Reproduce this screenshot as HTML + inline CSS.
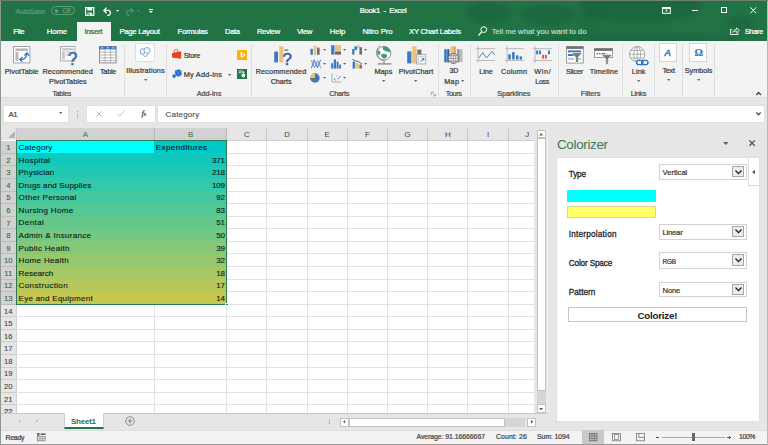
<!DOCTYPE html>
<html lang="en">
<head>
<meta charset="utf-8">
<title>Book1 - Excel</title>
<style>
html,body{margin:0;padding:0}
body{width:768px;height:445px;overflow:hidden;position:relative;background:#e6e6e6;font-family:"Liberation Sans",sans-serif;}
.a{position:absolute;box-sizing:border-box}
.t{position:absolute;white-space:pre;display:block;-webkit-text-stroke:.22px currentColor}
svg{display:block;overflow:visible}
</style>
</head>
<body>
<!-- title bar + ribbon tabs -->
<header class="a" style="left:0;top:0;width:768px;height:41px;background:#217346;overflow:hidden">
<div class="a" style="left:466px;top:2px;width:46px;height:22px;border-radius:50%;background:rgba(0,30,15,0.13);filter:blur(2px)"></div>
<div class="a" style="left:521px;top:4px;width:54px;height:22px;border-radius:50%;background:rgba(0,30,15,0.12);filter:blur(2px)"></div>
<div class="a" style="left:578px;top:-14px;width:124px;height:38px;border-radius:50%;background:rgba(0,30,15,0.13);filter:blur(2px)"></div>
<div class="a" style="left:520px;top:33px;width:220px;height:12px;border-radius:50%;background:rgba(0,30,15,0.1);filter:blur(2px)"></div>
<div class="a" style="left:726px;top:16px;width:28px;height:14px;border-radius:50%;background:rgba(0,30,15,0.1);filter:blur(2px)"></div>
<div class="a" style="left:576px;top:10px;width:28px;height:20px;border-radius:50%;background:rgba(0,30,15,0.06);filter:blur(2px)"></div>
</header>
<div class="a " style="left:0.00px;top:0.00px;width:768.00px;height:1.00px;background:#6f7f76;"></div>
<span id="t0" class="t" style="left:15.30px;top:6.81px;font-size:7.52px;line-height:9.78px;color:#5f9c7c;letter-spacing:-0.299px;">AutoSave</span>
<div class="a " style="left:51.00px;top:6.30px;width:23.50px;height:9.20px;border:1px solid #5f9c7c;border-radius:5px;"></div>
<div class="a " style="left:55.00px;top:9.20px;width:3.40px;height:3.40px;background:#5f9c7c;border-radius:50%;"></div>
<span id="t1" class="t" style="left:62.60px;top:7.34px;font-size:6.40px;line-height:8.32px;color:#5f9c7c;letter-spacing:-0.211px;">Off</span>
<svg class="a" style="left:84.50px;top:6.80px;" width="9.4" height="9" viewBox="0 0 9.4 9"><path d="M.6 .6H8.8V8.4H.6Z" fill="none" stroke="#fff" stroke-width="1.2"/><rect x="2.3" y=".6" width="4.8" height="2.9" fill="#fff"/><rect x="2.6" y="5.6" width="4.2" height="2.8" fill="#fff"/><rect x="3.4" y="6.4" width="1.3" height="2" fill="#217346"/></svg>
<svg class="a" style="left:103.00px;top:6.80px;" width="9" height="9" viewBox="0 0 9 9"><path d="M1 3.4H5.6A2.6 2.6 0 0 1 5.6 8.4H4.2" fill="none" stroke="#fff" stroke-width="1.3"/><path d="M3.6 .6L.9 3.4L3.6 6.2" fill="none" stroke="#fff" stroke-width="1.3"/></svg>
<svg class="a" style="left:115.70px;top:10.40px;" width="3.2" height="1.8" viewBox="0 0 3.2 1.8"><path d="M0 0H3.2 L1.6 1.8Z" fill="#fff"/></svg>
<svg class="a" style="left:125.00px;top:6.80px;" width="9" height="9" viewBox="0 0 9 9"><path d="M8 3.4H3.4A2.6 2.6 0 0 0 3.4 8.4H4.8" fill="none" stroke="#4f9271" stroke-width="1.2"/><path d="M5.4 .6L8.1 3.4L5.4 6.2" fill="none" stroke="#4f9271" stroke-width="1.2"/></svg>
<svg class="a" style="left:137.40px;top:10.40px;" width="3.2" height="1.8" viewBox="0 0 3.2 1.8"><path d="M0 0H3.2 L1.6 1.8Z" fill="#4f9271"/></svg>
<div class="a " style="left:149.30px;top:8.80px;width:3.80px;height:1.00px;background:#fff;"></div>
<svg class="a" style="left:149.30px;top:10.90px;" width="3.8" height="2" viewBox="0 0 3.8 2"><path d="M0 0H3.8 L1.9 2Z" fill="#fff"/></svg>
<span id="t2" class="t" style="left:359.80px;top:6.40px;font-size:7.70px;line-height:10.01px;color:#fff;letter-spacing:-0.343px;">Book1  -  Excel</span>
<svg class="a" style="left:661.70px;top:6.70px;" width="8.8" height="6.8" viewBox="0 0 8.8 6.8"><rect x=".5" y=".5" width="7.8" height="5.8" fill="none" stroke="#fff"/><rect x=".5" y=".5" width="7.8" height="1.6" fill="#fff"/><path d="M4.4 2.6L5.9 4.2H2.9Z" fill="#fff"/></svg>
<div class="a " style="left:692.00px;top:10.00px;width:6.40px;height:1.00px;background:#fff;"></div>
<div class="a " style="left:720.80px;top:7.00px;width:6.40px;height:6.40px;border:1px solid #fff;"></div>
<svg class="a" style="left:749.70px;top:7.00px;" width="6.6" height="6.6" viewBox="0 0 6.6 6.6"><path d="M.3 .3L6.3 6.3M6.3 .3L.3 6.3" stroke="#fff" stroke-width="1"/></svg>
<div class="a " style="left:77.00px;top:22.20px;width:33.60px;height:19.00px;background:#f3f3f3;"></div>
<nav>
<span id="t3" class="t" style="left:13.30px;top:26.93px;font-size:7.80px;line-height:10.14px;color:#fff;letter-spacing:-0.393px;">File</span>
<span id="t4" class="t" style="left:46.70px;top:26.93px;font-size:7.80px;line-height:10.14px;color:#fff;letter-spacing:-0.104px;">Home</span>
<span id="t5" class="t" style="left:84.40px;top:26.93px;font-size:7.80px;line-height:10.14px;color:#217346;letter-spacing:-0.300px;">Insert</span>
<span id="t6" class="t" style="left:119.40px;top:26.93px;font-size:7.80px;line-height:10.14px;color:#fff;letter-spacing:-0.320px;">Page Layout</span>
<span id="t7" class="t" style="left:177.50px;top:26.93px;font-size:7.80px;line-height:10.14px;color:#fff;letter-spacing:-0.286px;">Formulas</span>
<span id="t8" class="t" style="left:225.00px;top:27.11px;font-size:7.52px;line-height:9.78px;color:#fff;letter-spacing:-0.297px;">Data</span>
<span id="t9" class="t" style="left:256.90px;top:27.08px;font-size:7.56px;line-height:9.83px;color:#fff;letter-spacing:-0.290px;">Review</span>
<span id="t10" class="t" style="left:296.90px;top:26.93px;font-size:7.80px;line-height:10.14px;color:#fff;letter-spacing:-0.389px;">View</span>
<span id="t11" class="t" style="left:329.80px;top:26.93px;font-size:7.80px;line-height:10.14px;color:#fff;letter-spacing:-0.149px;">Help</span>
<span id="t12" class="t" style="left:362.50px;top:26.93px;font-size:7.80px;line-height:10.14px;color:#fff;letter-spacing:-0.071px;">Nitro Pro</span>
<span id="t13" class="t" style="left:409.00px;top:26.93px;font-size:7.80px;line-height:10.14px;color:#fff;letter-spacing:-0.317px;">XY Chart Labels</span>
</nav>
<svg class="a" style="left:477.60px;top:26.00px;" width="9.2" height="10" viewBox="0 0 9.2 10"><circle cx="5.8" cy="3.6" r="2.9" fill="none" stroke="#fff" stroke-width="1"/><path d="M3.7 5.8L.5 9.5" stroke="#fff" stroke-width="1.2"/></svg>
<span id="t14" class="t" style="left:491.70px;top:26.93px;font-size:7.80px;line-height:10.14px;color:#cde2d5;letter-spacing:-0.055px;-webkit-text-stroke:.1px currentColor;">Tell me what you want to do</span>
<svg class="a" style="left:730.00px;top:27.30px;" width="10" height="8" viewBox="0 0 10 8"><path d="M2.2 2.6H.5V7.5H8V5.6" fill="none" stroke="#fff" stroke-width=".9"/><path d="M2.6 5.6C3 3.6 4.6 2.6 6.4 2.6V.9L9.4 3.4L6.4 5.8V4.2C5 4.1 3.6 4.5 2.6 5.6Z" fill="none" stroke="#fff" stroke-width=".8"/></svg>
<span id="t15" class="t" style="left:744.70px;top:27.18px;font-size:7.42px;line-height:9.65px;color:#fff;letter-spacing:-0.291px;">Share</span>
<!-- ribbon -->
<section class="a" style="left:0;top:41px;width:768px;height:57px;background:#f3f3f3;border-bottom:1px solid #dcdcdc"></section>
<div class="a " style="left:123.80px;top:43.50px;width:1.00px;height:52.50px;background:#dedede;"></div>
<div class="a " style="left:166.20px;top:43.50px;width:1.00px;height:52.50px;background:#dedede;"></div>
<div class="a " style="left:251.20px;top:43.50px;width:1.00px;height:52.50px;background:#dedede;"></div>
<div class="a " style="left:438.20px;top:43.50px;width:1.00px;height:52.50px;background:#dedede;"></div>
<div class="a " style="left:469.50px;top:43.50px;width:1.00px;height:52.50px;background:#dedede;"></div>
<div class="a " style="left:558.20px;top:43.50px;width:1.00px;height:52.50px;background:#dedede;"></div>
<div class="a " style="left:622.20px;top:43.50px;width:1.00px;height:52.50px;background:#dedede;"></div>
<div class="a " style="left:654.00px;top:43.50px;width:1.00px;height:52.50px;background:#dedede;"></div>
<div class="a " style="left:682.00px;top:43.50px;width:1.00px;height:52.50px;background:#dedede;"></div>
<div class="a " style="left:714.20px;top:43.50px;width:1.00px;height:52.50px;background:#dedede;"></div>
<svg class="a" style="left:13.40px;top:45.90px;" width="17.4" height="17.4" viewBox="0 0 17.4 17.4"><rect x=".5" y=".5" width="16.4" height="16.4" fill="#fff" stroke="#a0a0a0"/><rect x="2.4" y="2.4" width="12.6" height="2.6" fill="#b9b9b9"/><rect x="2.4" y="6" width="3" height="9" fill="#b9b9b9"/><path d="M7.4 13.4C11.6 13.6 13.8 11.4 13.8 7.6" fill="none" stroke="#2f74c0" stroke-width="1.4"/><path d="M11.4 9.6L13.8 6.8L16.2 9.6" fill="none" stroke="#2f74c0" stroke-width="1.3"/><path d="M9.4 11L6.8 13.4L9.4 15.8" fill="none" stroke="#2f74c0" stroke-width="1.3"/></svg>
<span id="t16" class="t" style="left:4.70px;top:66.55px;font-size:7.30px;line-height:9.49px;color:#3a3a3a;letter-spacing:0.036px;">PivotTable</span>
<svg class="a" style="left:60.30px;top:46.00px;" width="17.5" height="19.2" viewBox="0 0 17.5 19.2"><rect x=".5" y=".5" width="14.4" height="14.4" fill="#f8f8f8" stroke="#adadad"/><rect x="2.2" y="2.2" width="11" height="2.2" fill="#c4c4c4"/><rect x="2.2" y="5.4" width="2.6" height="7.8" fill="#c4c4c4"/><rect x="5.8" y="5.4" width="4" height="1.6" fill="#d2d2d2"/><rect x="5.8" y="8" width="3" height="1.6" fill="#d2d2d2"/><text x="7.8" y="18.8" font-family="Liberation Sans, sans-serif" font-size="17.5" fill="#2f74c0" stroke="#2f74c0" stroke-width=".5">?</text></svg>
<span id="t17" class="t" style="left:42.50px;top:66.55px;font-size:7.30px;line-height:9.49px;color:#3a3a3a;letter-spacing:0.082px;">Recommended</span>
<span id="t18" class="t" style="left:49.00px;top:76.95px;font-size:7.30px;line-height:9.49px;color:#3a3a3a;letter-spacing:0.037px;">PivotTables</span>
<svg class="a" style="left:99.00px;top:45.90px;" width="17.6" height="17.4" viewBox="0 0 17.6 17.4"><rect x=".5" y=".5" width="16.6" height="16.4" fill="#fff" stroke="#8c8c8c"/><rect x=".5" y=".5" width="16.6" height="2.9" fill="#3b7ac6"/><path d="M.5 6.2H17.1" stroke="#a6a6a6" stroke-width=".8"/><path d="M.5 9H17.1" stroke="#a6a6a6" stroke-width=".8"/><path d="M.5 11.8H17.1" stroke="#a6a6a6" stroke-width=".8"/><path d="M.5 14.6H17.1" stroke="#a6a6a6" stroke-width=".8"/><path d="M6 3.4V16.9" stroke="#a6a6a6" stroke-width=".8"/><path d="M11.6 3.4V16.9" stroke="#a6a6a6" stroke-width=".8"/><rect x="2.6" y="1.3" width="1.4" height="1.1" fill="#fff"/><rect x="8.1" y="1.3" width="1.4" height="1.1" fill="#fff"/><rect x="13.6" y="1.3" width="1.4" height="1.1" fill="#fff"/></svg>
<span id="t19" class="t" style="left:100.00px;top:66.55px;font-size:7.30px;line-height:9.49px;color:#3a3a3a;letter-spacing:-0.288px;">Table</span>
<span id="t20" class="t" style="left:52.50px;top:89.13px;font-size:7.03px;line-height:9.13px;color:#4a4a4a;letter-spacing:-0.296px;">Tables</span>
<div class="a " style="left:135.30px;top:43.30px;width:19.40px;height:18.40px;background:#fcfcfc;border:1px solid #dedede;"></div>
<svg class="a" style="left:139.60px;top:47.40px;" width="11" height="10.4" viewBox="0 0 11 10.4"><rect x=".6" y="2" width="5.4" height="5" rx=".6" fill="none" stroke="#6f9bd6" stroke-width=".9"/><circle cx="7" cy="3.6" r="3" fill="#fdfdfd" stroke="#6f9bd6" stroke-width=".9"/><path d="M5.4 5.2L7.8 7.6L5.4 10L3 7.6Z" fill="#fdfdfd" stroke="#6f9bd6" stroke-width=".9"/></svg>
<span id="t21" class="t" style="left:126.30px;top:65.75px;font-size:7.30px;line-height:9.49px;color:#3a3a3a;letter-spacing:0.124px;">Illustrations</span>
<svg class="a" style="left:143.60px;top:79.05px;" width="3.4" height="1.9" viewBox="0 0 3.4 1.9"><path d="M0 0H3.4 L1.7 1.9Z" fill="#666"/></svg>
<svg class="a" style="left:171.80px;top:49.40px;" width="9.4" height="10" viewBox="0 0 9.4 10"><path d="M0 3.9L9.2 2.3V9.8L0 8.4Z" fill="#e8431d"/><path d="M2.3 3.6V1.8C2.3 .4 5.6 -.2 5.6 1.2V2.8" fill="none" stroke="#e8431d" stroke-width=".9"/></svg>
<span id="t22" class="t" style="left:183.70px;top:50.55px;font-size:7.30px;line-height:9.49px;color:#3a3a3a;letter-spacing:-0.213px;">Store</span>
<svg class="a" style="left:171.60px;top:69.40px;" width="9.8" height="9.4" viewBox="0 0 9.8 9.4"><path d="M3 1.4L7 .2L9.6 2V6L6.4 7.7L3 6.5Z" fill="#1f70c9"/><path d="M3.2 1.8L6.2 3.2L9.4 2.1M6.2 3.2V7.4" fill="none" stroke="#6aa9e8" stroke-width=".55"/><circle cx="2.1" cy="7.1" r="2.05" fill="#1f70c9" stroke="#f3f3f3" stroke-width=".5"/></svg>
<span id="t23" class="t" style="left:183.70px;top:69.95px;font-size:7.30px;line-height:9.49px;color:#3a3a3a;letter-spacing:0.245px;">My Add-ins</span>
<svg class="a" style="left:228.30px;top:73.65px;" width="3.4" height="1.9" viewBox="0 0 3.4 1.9"><path d="M0 0H3.4 L1.7 1.9Z" fill="#666"/></svg>
<div class="a " style="left:236.70px;top:49.80px;width:10.40px;height:10.00px;background:#fbb10a;"></div>
<svg class="a" style="left:236.70px;top:49.80px;" width="10.4" height="10" viewBox="0 0 10.4 10"><path d="M3.6 1.8L4.9 2.3V6.2L7.2 5.2L5.7 4.5L5.2 3.3L8 4.3V5.7L4.9 7.6L3.6 6.9Z" fill="#fff"/></svg>
<div class="a " style="left:236.70px;top:69.20px;width:10.40px;height:10.00px;background:#1d7a47;"></div>
<svg class="a" style="left:236.70px;top:69.20px;" width="10.4" height="10" viewBox="0 0 10.4 10"><rect x="1.6" y="1.5" width="4.2" height="1" fill="#cfe8d8"/><rect x="1.6" y="3.3" width="3" height="1" fill="#cfe8d8"/><circle cx="6.4" cy="6.6" r="1.9" fill="#fff"/><path d="M6.4 2.4V5" stroke="#fff" stroke-width=".9"/><path d="M5.2 3.8L6.4 2.4L7.6 3.8" fill="none" stroke="#fff" stroke-width=".7"/></svg>
<span id="t24" class="t" style="left:196.70px;top:88.95px;font-size:7.30px;line-height:9.49px;color:#4a4a4a;letter-spacing:-0.025px;">Add-ins</span>
<svg class="a" style="left:273.60px;top:46.20px;" width="18" height="19" viewBox="0 0 18 19"><rect x=".2" y="5.6" width="3.8" height="10.8" fill="#3b78c2"/><rect x="5.2" y=".2" width="4.2" height="16.2" fill="#e9c27c"/><rect x="10.4" y="3.4" width="3.8" height="1.6" fill="#8a8a8a"/><text x="8.4" y="18.6" font-family="Liberation Sans, sans-serif" font-size="17" fill="#335f9e" stroke="#335f9e" stroke-width=".5">?</text></svg>
<span id="t25" class="t" style="left:255.70px;top:66.55px;font-size:7.30px;line-height:9.49px;color:#3a3a3a;letter-spacing:0.102px;">Recommended</span>
<span id="t26" class="t" style="left:270.70px;top:76.95px;font-size:7.30px;line-height:9.49px;color:#3a3a3a;letter-spacing:-0.100px;">Charts</span>
<svg class="a" style="left:310.30px;top:45.00px;" width="10.4" height="9.8" viewBox="0 0 10.4 9.8"><rect x=".4" y="3.8" width="2.4" height="6" fill="#3b78c2"/><rect x="3.6" y=".6" width="2.6" height="9.2" fill="#e9c27c"/><rect x="7" y="2.6" width="2.6" height="7.2" fill="#6e6e6e"/></svg>
<svg class="a" style="left:330.70px;top:45.00px;" width="10.4" height="9.8" viewBox="0 0 10.4 9.8"><rect x=".2" y=".2" width="3.2" height="9.4" fill="#3b78c2"/><rect x="4" y=".2" width="6" height="5.6" fill="#e9c27c"/><rect x="4" y="6.4" width="6" height="3.2" fill="#6e6e6e"/></svg>
<svg class="a" style="left:351.50px;top:45.00px;" width="10.4" height="9.8" viewBox="0 0 10.4 9.8"><rect x=".2" y="4" width="2.2" height="5.6" fill="#3b78c2"/><rect x="2.4" y="1.4" width="2.6" height="3.6" fill="#3b78c2"/><rect x="5" y=".2" width="2.4" height="3" fill="#e9c27c"/><rect x="7.4" y="2.2" width="2.6" height="7.4" fill="#6e6e6e"/></svg>
<svg class="a" style="left:310.60px;top:59.00px;" width="10.4" height="9.8" viewBox="0 0 10.4 9.8"><path d="M.2 5H10" stroke="#a0a0a0" stroke-width=".6"/><path d="M.4 9.2L3.2 .8L6.4 8.8L9.6 .8" fill="none" stroke="#3b78c2" stroke-width=".95"/><path d="M.4 1L3.4 9L6.6 1.6L9.8 9.2" fill="none" stroke="#6f95cc" stroke-width=".95"/></svg>
<svg class="a" style="left:330.70px;top:59.00px;" width="10.4" height="9.8" viewBox="0 0 10.4 9.8"><rect x=".2" y="4.2" width="2" height="5.4" fill="#3b78c2"/><rect x="2.8" y=".4" width="2.2" height="9.2" fill="#3b78c2"/><rect x="5.6" y="2.6" width="2" height="7" fill="#3b78c2"/><rect x="8.2" y="5.6" width="1.8" height="4" fill="#3b78c2"/></svg>
<svg class="a" style="left:351.50px;top:59.00px;" width="10.4" height="9.8" viewBox="0 0 10.4 9.8"><rect x=".6" y="2.6" width="2.6" height="7" fill="#3b78c2"/><rect x="4" y="4.2" width="2.8" height="5.4" fill="#e9c27c"/><rect x="7.4" y="5.6" width="2.4" height="4" fill="#6e6e6e"/><path d="M.4 .4L3.6 1.8L6.8 2.8L10 5" fill="none" stroke="#555" stroke-width=".9"/></svg>
<svg class="a" style="left:310.30px;top:73.30px;" width="10.4" height="9.8" viewBox="0 0 10.4 9.8"><circle cx="5" cy="5" r="4.7" fill="#3b78c2"/><path d="M5 5V.3A4.7 4.7 0 0 0 .3 5Z" fill="#e9c27c"/><path d="M5 5H.3A4.7 4.7 0 0 0 2 8.6Z" fill="#6e6e6e"/></svg>
<svg class="a" style="left:330.70px;top:73.30px;" width="10.4" height="9.8" viewBox="0 0 10.4 9.8"><path d="M1 .2V9H10.2" fill="none" stroke="#9a9a9a" stroke-width=".8"/><rect x="3" y="5.6" width="1.2" height="1.2" fill="#3b78c2"/><rect x="5" y="2.4" width="1.2" height="1.2" fill="#e9c27c"/><rect x="6.6" y="5" width="1.2" height="1.2" fill="#3b78c2"/><rect x="8.2" y="3.2" width="1.2" height="1.2" fill="#3b78c2"/><rect x="4" y="7" width="1.2" height="1.2" fill="#e9c27c"/></svg>
<svg class="a" style="left:322.60px;top:49.10px;" width="3.2" height="1.8" viewBox="0 0 3.2 1.8"><path d="M0 0H3.2 L1.6 1.8Z" fill="#666"/></svg>
<svg class="a" style="left:322.60px;top:63.10px;" width="3.2" height="1.8" viewBox="0 0 3.2 1.8"><path d="M0 0H3.2 L1.6 1.8Z" fill="#666"/></svg>
<svg class="a" style="left:322.60px;top:77.30px;" width="3.2" height="1.8" viewBox="0 0 3.2 1.8"><path d="M0 0H3.2 L1.6 1.8Z" fill="#666"/></svg>
<svg class="a" style="left:343.40px;top:49.10px;" width="3.2" height="1.8" viewBox="0 0 3.2 1.8"><path d="M0 0H3.2 L1.6 1.8Z" fill="#666"/></svg>
<svg class="a" style="left:343.40px;top:63.10px;" width="3.2" height="1.8" viewBox="0 0 3.2 1.8"><path d="M0 0H3.2 L1.6 1.8Z" fill="#666"/></svg>
<svg class="a" style="left:343.40px;top:77.30px;" width="3.2" height="1.8" viewBox="0 0 3.2 1.8"><path d="M0 0H3.2 L1.6 1.8Z" fill="#666"/></svg>
<svg class="a" style="left:364.10px;top:49.10px;" width="3.2" height="1.8" viewBox="0 0 3.2 1.8"><path d="M0 0H3.2 L1.6 1.8Z" fill="#666"/></svg>
<svg class="a" style="left:364.10px;top:63.10px;" width="3.2" height="1.8" viewBox="0 0 3.2 1.8"><path d="M0 0H3.2 L1.6 1.8Z" fill="#666"/></svg>
<span id="t27" class="t" style="left:329.20px;top:88.95px;font-size:7.30px;line-height:9.49px;color:#4a4a4a;letter-spacing:-0.240px;">Charts</span>
<svg class="a" style="left:376.00px;top:45.20px;" width="15.8" height="20" viewBox="0 0 15.8 20"><circle cx="8" cy="8.2" r="6.8" fill="#fff" stroke="#8e8e8e" stroke-width="1"/><path d="M6.4 2.4C8 1.4 10.4 1.6 12 2.8C13.6 4 14.4 5.8 14.2 7C13 7.6 12.2 6.4 11 6.6C9.8 6.8 9.6 5.6 8.6 5.4C7.4 5.2 6.8 4.4 6.4 2.4Z" fill="#459b74"/><path d="M2 5.6C3 5.2 4 6 4.4 7.2C4.6 8.6 3.8 9.6 3 10.4C2 9.4 1.4 7.4 2 5.6Z" fill="#459b74"/><path d="M5.6 9C7 8.4 9.2 8.8 10.6 9.6C11.6 10.4 11.2 12 10 13C8.6 14 7 13.6 6 12.4C5.2 11.4 5 10 5.6 9Z" fill="#459b74"/><path d="M4.2 .6C-1.6 4.6 -.6 13.2 6.8 15.6" fill="none" stroke="#8e8e8e" stroke-width="1"/><path d="M8 15.2V18.4" stroke="#8e8e8e" stroke-width="1.3"/><path d="M1.8 18.9H15.4" stroke="#8e8e8e" stroke-width="1.4"/></svg>
<span id="t28" class="t" style="left:374.50px;top:66.55px;font-size:7.30px;line-height:9.49px;color:#3a3a3a;letter-spacing:-0.015px;">Maps</span>
<svg class="a" style="left:381.60px;top:79.85px;" width="3.4" height="1.9" viewBox="0 0 3.4 1.9"><path d="M0 0H3.4 L1.7 1.9Z" fill="#666"/></svg>
<svg class="a" style="left:407.00px;top:46.20px;" width="19.2" height="18.6" viewBox="0 0 19.2 18.6"><rect x=".2" y="5.4" width="4.2" height="12" fill="#3b78c2"/><rect x="5.2" y=".2" width="4.4" height="17.2" fill="#e9c27c"/><rect x="10.4" y="3.6" width="4" height="7" fill="#6e6e6e"/><rect x="9.4" y="8.6" width="9.4" height="9.4" fill="#fafafa" stroke="#a6a6a6" stroke-width=".9"/><rect x="10.6" y="9.8" width="7" height="1.4" fill="#cfcfcf"/><rect x="10.6" y="11.8" width="1.6" height="5" fill="#cfcfcf"/><path d="M13.6 15.8L16.6 12.8M14.8 12.6H16.8V14.6" fill="none" stroke="#2f74c0" stroke-width="1"/></svg>
<span id="t29" class="t" style="left:398.70px;top:66.55px;font-size:7.30px;line-height:9.49px;color:#3a3a3a;letter-spacing:0.047px;">PivotChart</span>
<svg class="a" style="left:414.30px;top:79.85px;" width="3.4" height="1.9" viewBox="0 0 3.4 1.9"><path d="M0 0H3.4 L1.7 1.9Z" fill="#666"/></svg>
<svg class="a" style="left:430.70px;top:92.00px;" width="4.8" height="4.2" viewBox="0 0 4.8 4.2"><path d="M.3 3V.3H3" fill="none" stroke="#8a8a8a" stroke-width=".7"/><path d="M2 1.6L4.3 3.8M4.4 2V3.9H2.4" fill="none" stroke="#8a8a8a" stroke-width=".7"/></svg>
<svg class="a" style="left:444.30px;top:45.60px;" width="19" height="18" viewBox="0 0 19 18"><rect x=".2" y="3" width="2.6" height="13.6" rx="1" fill="#3b78c2"/><rect x="3.2" y="3" width="2.2" height="13.6" rx="1" fill="#2a5f9e"/><rect x="6.4" y=".2" width="2.6" height="9" rx="1" fill="#e9c27c"/><rect x="9.4" y=".2" width="2.4" height="9" rx="1" fill="#d9a94e"/><rect x="13" y="3" width="2.8" height="13.6" rx="1" fill="#9a9a9a"/><rect x="16" y="3" width="2.6" height="13.6" rx="1" fill="#bdbdbd"/><circle cx="9.4" cy="12.4" r="5" fill="#fff" stroke="#666" stroke-width=".9"/><path d="M4.4 12.4H14.4M9.4 7.4V17.4M5.2 9.8H13.6M5.2 15H13.6" stroke="#666" stroke-width=".6" fill="none"/><ellipse cx="9.4" cy="12.4" rx="2.4" ry="5" fill="none" stroke="#666" stroke-width=".6"/></svg>
<span id="t30" class="t" style="left:449.50px;top:66.69px;font-size:7.10px;line-height:9.23px;color:#3a3a3a;letter-spacing:-0.278px;">3D</span>
<span id="t31" class="t" style="left:444.30px;top:76.95px;font-size:7.30px;line-height:9.49px;color:#3a3a3a;letter-spacing:0.248px;">Map</span>
<svg class="a" style="left:461.00px;top:80.05px;" width="3.4" height="1.9" viewBox="0 0 3.4 1.9"><path d="M0 0H3.4 L1.7 1.9Z" fill="#666"/></svg>
<span id="t32" class="t" style="left:445.70px;top:88.95px;font-size:7.30px;line-height:9.49px;color:#4a4a4a;letter-spacing:-0.386px;">Tours</span>
<svg class="a" style="left:476.40px;top:46.60px;" width="19.4" height="15.6" viewBox="0 0 19.4 15.6"><path d="M0 1.7H19.2M0 13.5H19.2M2.1 -.8V16" stroke="#a6a6a6" stroke-width=".75" fill="none"/><path d="M3 11L6.7 5.4L10.5 11L16.1 4.4L18.6 7.9" fill="none" stroke="#4a86cc" stroke-width="1"/></svg>
<svg class="a" style="left:504.80px;top:46.60px;" width="19.4" height="15.6" viewBox="0 0 19.4 15.6"><path d="M0 1.7H19.2M0 13.5H19.2M2.1 -.8V16" stroke="#a6a6a6" stroke-width=".75" fill="none"/><rect x="3.3" y="7.3" width="2.5" height="5.2" fill="#3b78c2"/><rect x="7.1" y="5.1" width="2.5" height="7.4" fill="#3b78c2"/><rect x="11" y="8.3" width="2.4" height="4.2" fill="#3b78c2"/><rect x="14.6" y="9.4" width="2.5" height="3.1" fill="#3b78c2"/></svg>
<svg class="a" style="left:533.10px;top:46.60px;" width="19.4" height="15.6" viewBox="0 0 19.4 15.6"><path d="M0 1.7H19.2M0 13.5H19.2M2.1 -.8V16" stroke="#a6a6a6" stroke-width=".75" fill="none"/><rect x="3.1" y="3.5" width="1.9" height="3.8" fill="#3b78c2"/><rect x="5.9" y="3.5" width="2" height="3.8" fill="#3b78c2"/><rect x="9.1" y="7.9" width="1.9" height="3.8" fill="#dd5a3a"/><rect x="11.9" y="7.9" width="1.9" height="3.8" fill="#dd5a3a"/><rect x="15" y="3.5" width="1.9" height="3.8" fill="#3b78c2"/></svg>
<span id="t33" class="t" style="left:479.30px;top:66.55px;font-size:7.30px;line-height:9.49px;color:#3a3a3a;letter-spacing:-0.132px;">Line</span>
<span id="t34" class="t" style="left:501.00px;top:66.55px;font-size:7.30px;line-height:9.49px;color:#3a3a3a;letter-spacing:0.169px;">Column</span>
<span id="t35" class="t" style="left:534.30px;top:66.55px;font-size:7.30px;line-height:9.49px;color:#3a3a3a;letter-spacing:0.597px;">Win/</span>
<span id="t36" class="t" style="left:535.30px;top:77.12px;font-size:7.05px;line-height:9.17px;color:#3a3a3a;letter-spacing:-0.297px;">Loss</span>
<span id="t37" class="t" style="left:497.30px;top:88.95px;font-size:7.30px;line-height:9.49px;color:#4a4a4a;letter-spacing:-0.120px;">Sparklines</span>
<svg class="a" style="left:565.70px;top:45.80px;" width="17.8" height="17.6" viewBox="0 0 17.8 17.6"><rect x=".5" y=".5" width="16.8" height="16.6" fill="#fff" stroke="#9a9a9a"/><rect x=".5" y=".5" width="16.8" height="2.4" fill="#6e6e6e"/><rect x="2" y="4.4" width="13" height="2" fill="#3b78c2"/><rect x="2" y="8" width="8" height="2" fill="#3b78c2"/><rect x="2" y="11.8" width="6" height="2" fill="#a9c6e8"/><rect x="10.6" y="11.8" width="4.6" height="2" fill="#a9c6e8"/><path d="M5.4 6.6H16.4L12.4 11.2V16.6H9.6V11.2Z" fill="#7a7a7a" stroke="#fff" stroke-width=".6"/></svg>
<span id="t38" class="t" style="left:566.00px;top:66.55px;font-size:7.30px;line-height:9.49px;color:#3a3a3a;letter-spacing:-0.210px;">Slicer</span>
<svg class="a" style="left:594.20px;top:48.00px;" width="19" height="16.4" viewBox="0 0 19 16.4"><rect x=".5" y=".5" width="18" height="9" fill="#fff" stroke="#9a9a9a"/><rect x=".5" y=".5" width="18" height="2.4" fill="#6e6e6e"/><rect x="2.4" y="5" width="1.6" height="1.4" fill="#3b78c2"/><rect x="5" y="5" width="1.6" height="1.4" fill="#3b78c2"/><rect x="7.6" y="5" width="3.4" height="1.4" fill="#3b78c2"/><rect x="12.2" y="5" width="1.6" height="1.4" fill="#a9c6e8"/><path d="M7.4 6.6H18.4L14.2 11V16.4H11.8V11Z" fill="#7a7a7a" stroke="#fff" stroke-width=".6"/></svg>
<span id="t39" class="t" style="left:589.70px;top:66.55px;font-size:7.30px;line-height:9.49px;color:#3a3a3a;letter-spacing:0.141px;">Timeline</span>
<span id="t40" class="t" style="left:580.80px;top:88.95px;font-size:7.30px;line-height:9.49px;color:#4a4a4a;letter-spacing:-0.062px;">Filters</span>
<svg class="a" style="left:629.00px;top:45.60px;" width="20" height="19.4" viewBox="0 0 20 19.4"><circle cx="8.2" cy="8.2" r="7.6" fill="#fff" stroke="#9a9a9a" stroke-width=".9"/><ellipse cx="8.2" cy="8.2" rx="3.4" ry="7.6" fill="none" stroke="#9a9a9a" stroke-width=".8"/><path d="M.6 8.2H15.8M8.2 .6V15.8M1.8 4.4H14.6M1.8 12H14.6" stroke="#9a9a9a" stroke-width=".8" fill="none"/><rect x="6.4" y="12.8" width="13.4" height="6.6" fill="#f3f3f3" opacity=".0"/><rect x="7.6" y="14.4" width="6.4" height="4.2" rx="2.1" fill="#f3f3f3" stroke="#2f74c0" stroke-width="1.4"/><rect x="12.6" y="14.4" width="6.4" height="4.2" rx="2.1" fill="none" stroke="#2f74c0" stroke-width="1.4"/></svg>
<span id="t41" class="t" style="left:631.70px;top:66.55px;font-size:7.30px;line-height:9.49px;color:#3a3a3a;letter-spacing:0.136px;">Link</span>
<svg class="a" style="left:636.60px;top:79.85px;" width="3.4" height="1.9" viewBox="0 0 3.4 1.9"><path d="M0 0H3.4 L1.7 1.9Z" fill="#666"/></svg>
<span id="t42" class="t" style="left:630.80px;top:88.95px;font-size:7.30px;line-height:9.49px;color:#4a4a4a;letter-spacing:-0.387px;">Links</span>
<div class="a " style="left:658.70px;top:43.30px;width:18.80px;height:18.40px;background:#fdfdfd;border:1px solid #d6d6d6;"></div>
<span class="t" style="left:664.4px;top:45.9px;font-size:9.6px;line-height:13px;color:#3b78c2;font-style:italic;-webkit-text-stroke:.5px #3b78c2;">A</span>
<span id="t43" class="t" style="left:662.50px;top:65.75px;font-size:7.30px;line-height:9.49px;color:#3a3a3a;letter-spacing:-0.297px;">Text</span>
<svg class="a" style="left:666.60px;top:79.05px;" width="3.4" height="1.9" viewBox="0 0 3.4 1.9"><path d="M0 0H3.4 L1.7 1.9Z" fill="#666"/></svg>
<div class="a " style="left:688.70px;top:43.30px;width:18.80px;height:18.40px;background:#fdfdfd;border:1px solid #d6d6d6;"></div>
<span class="t" style="left:694.6px;top:46px;font-size:10.5px;line-height:13px;color:#3b78c2;font-family:'Liberation Serif',serif;font-weight:bold;">Ω</span>
<span id="t44" class="t" style="left:684.70px;top:65.75px;font-size:7.30px;line-height:9.49px;color:#3a3a3a;letter-spacing:-0.031px;">Symbols</span>
<svg class="a" style="left:696.60px;top:79.05px;" width="3.4" height="1.9" viewBox="0 0 3.4 1.9"><path d="M0 0H3.4 L1.7 1.9Z" fill="#666"/></svg>
<svg class="a" style="left:755.80px;top:92.00px;" width="5.2" height="3.2" viewBox="0 0 5.2 3.2"><path d="M.3 3L2.6 .5L4.9 3" fill="none" stroke="#444" stroke-width="1.3"/></svg>
<!-- formula bar -->
<div class="a " style="left:0.00px;top:98.00px;width:768.00px;height:30.00px;background:#e6e6e6;"></div>
<div class="a " style="left:4.10px;top:105.90px;width:63.50px;height:15.70px;background:#fff;box-shadow:0 0 0 .5px #dadada;"></div>
<span id="t45" class="t" style="left:8.40px;top:110.10px;font-size:7.84px;line-height:10.19px;color:#444;letter-spacing:-0.278px;">A1</span>
<svg class="a" style="left:59.30px;top:112.25px;" width="3.4" height="1.9" viewBox="0 0 3.4 1.9"><path d="M0 0H3.4 L1.7 1.9Z" fill="#666"/></svg>
<div class="a " style="left:76.60px;top:110.60px;width:0.90px;height:0.90px;background:#a6a6a6;"></div>
<div class="a " style="left:76.60px;top:112.70px;width:0.90px;height:0.90px;background:#a6a6a6;"></div>
<div class="a " style="left:76.60px;top:114.80px;width:0.90px;height:0.90px;background:#a6a6a6;"></div>
<div class="a " style="left:76.60px;top:116.90px;width:0.90px;height:0.90px;background:#a6a6a6;"></div>
<div class="a " style="left:86.60px;top:105.90px;width:68.90px;height:15.70px;background:#fff;box-shadow:0 0 0 .5px #dadada;"></div>
<svg class="a" style="left:95.60px;top:110.60px;" width="6" height="6" viewBox="0 0 6 6"><path d="M.4 .4L5.6 5.6M5.6 .4L.4 5.6" stroke="#b8b8b8" stroke-width=".9"/></svg>
<svg class="a" style="left:117.20px;top:110.20px;" width="8" height="6.8" viewBox="0 0 8 6.8"><path d="M.4 4L2.6 6.2L7.6 .5" fill="none" stroke="#b8b8b8" stroke-width=".9"/></svg>
<span class="t" style="left:141.4px;top:108.4px;font-size:8.4px;line-height:11px;color:#444;font-family:'Liberation Serif',serif;font-style:italic;letter-spacing:-.3px">f<span style="font-size:6px">x</span></span>
<div class="a " style="left:158.00px;top:105.90px;width:606.30px;height:15.70px;background:#fff;box-shadow:0 0 0 .5px #dadada;"></div>
<span id="t46" class="t" style="left:165.60px;top:109.70px;font-size:8.00px;line-height:10.40px;color:#484848;letter-spacing:0.162px;-webkit-text-stroke:.1px currentColor;">Category</span>
<svg class="a" style="left:756.20px;top:111.60px;" width="5" height="3.2" viewBox="0 0 5 3.2"><path d="M.3 .4L2.5 2.7L4.7 .4" fill="none" stroke="#444" stroke-width="1.3"/></svg>
<!-- worksheet grid -->
<main class="a" style="left:0;top:128px;width:534px;height:285.2px;background:#fff;overflow:hidden">
<div class="a " style="left:0.00px;top:0.00px;width:534.00px;height:12.20px;background:#e6e6e6;"></div>
<div class="a " style="left:16.40px;top:0.00px;width:210.40px;height:12.20px;background:#d2d2d2;"></div>
<div class="a " style="left:16.40px;top:11.50px;width:210.40px;height:0.70px;background:#3f8a63;"></div>
<div class="a " style="left:153.80px;top:1.00px;width:1.00px;height:11.00px;background:#b8b8b8;"></div>
<div class="a " style="left:226.30px;top:1.00px;width:1.00px;height:11.00px;background:#b8b8b8;"></div>
<div class="a " style="left:266.40px;top:1.00px;width:1.00px;height:11.00px;background:#c6c6c6;"></div>
<div class="a " style="left:306.60px;top:1.00px;width:1.00px;height:11.00px;background:#c6c6c6;"></div>
<div class="a " style="left:346.80px;top:1.00px;width:1.00px;height:11.00px;background:#c6c6c6;"></div>
<div class="a " style="left:387.00px;top:1.00px;width:1.00px;height:11.00px;background:#c6c6c6;"></div>
<div class="a " style="left:427.20px;top:1.00px;width:1.00px;height:11.00px;background:#c6c6c6;"></div>
<div class="a " style="left:467.40px;top:1.00px;width:1.00px;height:11.00px;background:#c6c6c6;"></div>
<div class="a " style="left:507.60px;top:1.00px;width:1.00px;height:11.00px;background:#c6c6c6;"></div>
<div class="a " style="left:15.90px;top:1.00px;width:1.00px;height:11.00px;background:#c6c6c6;"></div>
<div class="a " style="left:226.80px;top:11.60px;width:307.40px;height:1.00px;background:#cfcfcf;"></div>
<svg class="a" style="left:7.6px;top:3.2px" width="7" height="7" viewBox="0 0 7 7"><path d="M7 0V7H0Z" fill="#b4b4b4"/></svg>
<div class="a " style="left:0.00px;top:12.70px;width:16.40px;height:272.60px;background:#e6e6e6;"></div>
<div class="a " style="left:0.00px;top:12.70px;width:16.40px;height:163.54px;background:#d2d2d2;"></div>
<div class="a " style="left:15.60px;top:12.70px;width:0.60px;height:163.54px;background:#3f8a63;"></div>
<div class="a " style="left:16.00px;top:176.24px;width:0.80px;height:109.06px;background:#cfcfcf;"></div>
<div class="a " style="left:0.00px;top:24.78px;width:16.40px;height:1.00px;background:#bdbdbd;"></div>
<div class="a " style="left:0.00px;top:37.36px;width:16.40px;height:1.00px;background:#bdbdbd;"></div>
<div class="a " style="left:0.00px;top:49.94px;width:16.40px;height:1.00px;background:#bdbdbd;"></div>
<div class="a " style="left:0.00px;top:62.52px;width:16.40px;height:1.00px;background:#bdbdbd;"></div>
<div class="a " style="left:0.00px;top:75.10px;width:16.40px;height:1.00px;background:#bdbdbd;"></div>
<div class="a " style="left:0.00px;top:87.68px;width:16.40px;height:1.00px;background:#bdbdbd;"></div>
<div class="a " style="left:0.00px;top:100.26px;width:16.40px;height:1.00px;background:#bdbdbd;"></div>
<div class="a " style="left:0.00px;top:112.84px;width:16.40px;height:1.00px;background:#bdbdbd;"></div>
<div class="a " style="left:0.00px;top:125.42px;width:16.40px;height:1.00px;background:#bdbdbd;"></div>
<div class="a " style="left:0.00px;top:138.00px;width:16.40px;height:1.00px;background:#bdbdbd;"></div>
<div class="a " style="left:0.00px;top:150.58px;width:16.40px;height:1.00px;background:#bdbdbd;"></div>
<div class="a " style="left:0.00px;top:163.16px;width:16.40px;height:1.00px;background:#bdbdbd;"></div>
<div class="a " style="left:0.00px;top:175.74px;width:16.40px;height:1.00px;background:#bdbdbd;"></div>
<div class="a " style="left:0.00px;top:188.32px;width:16.40px;height:1.00px;background:#cdcdcd;"></div>
<div class="a " style="left:0.00px;top:200.90px;width:16.40px;height:1.00px;background:#cdcdcd;"></div>
<div class="a " style="left:0.00px;top:213.48px;width:16.40px;height:1.00px;background:#cdcdcd;"></div>
<div class="a " style="left:0.00px;top:226.06px;width:16.40px;height:1.00px;background:#cdcdcd;"></div>
<div class="a " style="left:0.00px;top:238.64px;width:16.40px;height:1.00px;background:#cdcdcd;"></div>
<div class="a " style="left:0.00px;top:251.22px;width:16.40px;height:1.00px;background:#cdcdcd;"></div>
<div class="a " style="left:0.00px;top:263.80px;width:16.40px;height:1.00px;background:#cdcdcd;"></div>
<div class="a " style="left:0.00px;top:276.38px;width:16.40px;height:1.00px;background:#cdcdcd;"></div>
<div class="a " style="left:0.00px;top:288.96px;width:16.40px;height:1.00px;background:#cdcdcd;"></div>
<div class="a " style="left:16.40px;top:24.78px;width:517.60px;height:1.00px;background:#e1e1e1;"></div>
<div class="a " style="left:16.40px;top:37.36px;width:517.60px;height:1.00px;background:#e1e1e1;"></div>
<div class="a " style="left:16.40px;top:49.94px;width:517.60px;height:1.00px;background:#e1e1e1;"></div>
<div class="a " style="left:16.40px;top:62.52px;width:517.60px;height:1.00px;background:#e1e1e1;"></div>
<div class="a " style="left:16.40px;top:75.10px;width:517.60px;height:1.00px;background:#e1e1e1;"></div>
<div class="a " style="left:16.40px;top:87.68px;width:517.60px;height:1.00px;background:#e1e1e1;"></div>
<div class="a " style="left:16.40px;top:100.26px;width:517.60px;height:1.00px;background:#e1e1e1;"></div>
<div class="a " style="left:16.40px;top:112.84px;width:517.60px;height:1.00px;background:#e1e1e1;"></div>
<div class="a " style="left:16.40px;top:125.42px;width:517.60px;height:1.00px;background:#e1e1e1;"></div>
<div class="a " style="left:16.40px;top:138.00px;width:517.60px;height:1.00px;background:#e1e1e1;"></div>
<div class="a " style="left:16.40px;top:150.58px;width:517.60px;height:1.00px;background:#e1e1e1;"></div>
<div class="a " style="left:16.40px;top:163.16px;width:517.60px;height:1.00px;background:#e1e1e1;"></div>
<div class="a " style="left:16.40px;top:175.74px;width:517.60px;height:1.00px;background:#e1e1e1;"></div>
<div class="a " style="left:16.40px;top:188.32px;width:517.60px;height:1.00px;background:#e1e1e1;"></div>
<div class="a " style="left:16.40px;top:200.90px;width:517.60px;height:1.00px;background:#e1e1e1;"></div>
<div class="a " style="left:16.40px;top:213.48px;width:517.60px;height:1.00px;background:#e1e1e1;"></div>
<div class="a " style="left:16.40px;top:226.06px;width:517.60px;height:1.00px;background:#e1e1e1;"></div>
<div class="a " style="left:16.40px;top:238.64px;width:517.60px;height:1.00px;background:#e1e1e1;"></div>
<div class="a " style="left:16.40px;top:251.22px;width:517.60px;height:1.00px;background:#e1e1e1;"></div>
<div class="a " style="left:16.40px;top:263.80px;width:517.60px;height:1.00px;background:#e1e1e1;"></div>
<div class="a " style="left:16.40px;top:276.38px;width:517.60px;height:1.00px;background:#e1e1e1;"></div>
<div class="a " style="left:16.40px;top:288.96px;width:517.60px;height:1.00px;background:#e1e1e1;"></div>
<div class="a " style="left:153.80px;top:12.70px;width:1.00px;height:272.60px;background:#e1e1e1;"></div>
<div class="a " style="left:226.30px;top:12.70px;width:1.00px;height:272.60px;background:#e1e1e1;"></div>
<div class="a " style="left:266.40px;top:12.70px;width:1.00px;height:272.60px;background:#e1e1e1;"></div>
<div class="a " style="left:306.60px;top:12.70px;width:1.00px;height:272.60px;background:#e1e1e1;"></div>
<div class="a " style="left:346.80px;top:12.70px;width:1.00px;height:272.60px;background:#e1e1e1;"></div>
<div class="a " style="left:387.00px;top:12.70px;width:1.00px;height:272.60px;background:#e1e1e1;"></div>
<div class="a " style="left:427.20px;top:12.70px;width:1.00px;height:272.60px;background:#e1e1e1;"></div>
<div class="a " style="left:467.40px;top:12.70px;width:1.00px;height:272.60px;background:#e1e1e1;"></div>
<div class="a " style="left:507.60px;top:12.70px;width:1.00px;height:272.60px;background:#e1e1e1;"></div>
<div class="a " style="left:16.40px;top:12.70px;width:210.40px;height:12.68px;background:rgb(0,200,200);"></div>
<div class="a " style="left:16.40px;top:12.70px;width:137.90px;height:12.58px;background:rgb(0,255,255);"></div>
<div class="a " style="left:16.40px;top:25.28px;width:210.40px;height:12.68px;background:rgb(17,200,190);"></div>
<div class="a " style="left:16.40px;top:37.86px;width:210.40px;height:12.68px;background:rgb(33,200,180);"></div>
<div class="a " style="left:16.40px;top:50.44px;width:210.40px;height:12.68px;background:rgb(50,200,170);"></div>
<div class="a " style="left:16.40px;top:63.02px;width:210.40px;height:12.68px;background:rgb(67,200,160);"></div>
<div class="a " style="left:16.40px;top:75.60px;width:210.40px;height:12.68px;background:rgb(83,200,150);"></div>
<div class="a " style="left:16.40px;top:88.18px;width:210.40px;height:12.68px;background:rgb(100,200,140);"></div>
<div class="a " style="left:16.40px;top:100.76px;width:210.40px;height:12.68px;background:rgb(117,200,130);"></div>
<div class="a " style="left:16.40px;top:113.34px;width:210.40px;height:12.68px;background:rgb(133,200,120);"></div>
<div class="a " style="left:16.40px;top:125.92px;width:210.40px;height:12.68px;background:rgb(150,200,110);"></div>
<div class="a " style="left:16.40px;top:138.50px;width:210.40px;height:12.68px;background:rgb(167,200,100);"></div>
<div class="a " style="left:16.40px;top:151.08px;width:210.40px;height:12.68px;background:rgb(183,200,90);"></div>
<div class="a " style="left:16.40px;top:163.66px;width:210.40px;height:12.68px;background:rgb(200,200,80);"></div>
<div class="a " style="left:15.90px;top:12.00px;width:211.60px;height:164.80px;border:1px solid #2c7a52;"></div>
<div class="a " style="left:225.00px;top:174.60px;width:3.60px;height:3.60px;background:#217346;border:.7px solid #fff;"></div>
</main>
<span id="t47" class="t" style="left:82.35px;top:129.87px;font-size:7.90px;line-height:10.27px;color:#35754f;letter-spacing:0.000px;width:6px;text-align:center;-webkit-text-stroke:.05px currentColor;">A</span>
<span id="t48" class="t" style="left:187.55px;top:129.87px;font-size:7.90px;line-height:10.27px;color:#35754f;letter-spacing:0.000px;width:6px;text-align:center;-webkit-text-stroke:.05px currentColor;">B</span>
<span id="t49" class="t" style="left:243.85px;top:129.87px;font-size:7.90px;line-height:10.27px;color:#4a4a4a;letter-spacing:0.000px;width:6px;text-align:center;-webkit-text-stroke:.05px currentColor;">C</span>
<span id="t50" class="t" style="left:284.00px;top:129.87px;font-size:7.90px;line-height:10.27px;color:#4a4a4a;letter-spacing:0.000px;width:6px;text-align:center;-webkit-text-stroke:.05px currentColor;">D</span>
<span id="t51" class="t" style="left:324.20px;top:129.87px;font-size:7.90px;line-height:10.27px;color:#4a4a4a;letter-spacing:0.000px;width:6px;text-align:center;-webkit-text-stroke:.05px currentColor;">E</span>
<span id="t52" class="t" style="left:364.40px;top:129.87px;font-size:7.90px;line-height:10.27px;color:#4a4a4a;letter-spacing:0.000px;width:6px;text-align:center;-webkit-text-stroke:.05px currentColor;">F</span>
<span id="t53" class="t" style="left:404.60px;top:129.87px;font-size:7.90px;line-height:10.27px;color:#4a4a4a;letter-spacing:0.000px;width:6px;text-align:center;-webkit-text-stroke:.05px currentColor;">G</span>
<span id="t54" class="t" style="left:444.80px;top:129.87px;font-size:7.90px;line-height:10.27px;color:#4a4a4a;letter-spacing:0.000px;width:6px;text-align:center;-webkit-text-stroke:.05px currentColor;">H</span>
<span id="t55" class="t" style="left:485.00px;top:129.87px;font-size:7.90px;line-height:10.27px;color:#4a4a4a;letter-spacing:0.000px;width:6px;text-align:center;-webkit-text-stroke:.05px currentColor;">I</span>
<span id="t56" class="t" style="left:524.20px;top:129.87px;font-size:7.90px;line-height:10.27px;color:#4a4a4a;letter-spacing:0.000px;width:6px;text-align:center;-webkit-text-stroke:.05px currentColor;">J</span>
<span id="t57" class="t" style="left:0.60px;top:143.05px;font-size:7.60px;line-height:9.88px;color:#2c6a48;letter-spacing:0.000px;width:15.4px;text-align:center;-webkit-text-stroke:.1px currentColor;">1</span>
<span id="t58" class="t" style="left:0.60px;top:155.63px;font-size:7.60px;line-height:9.88px;color:#2c6a48;letter-spacing:0.000px;width:15.4px;text-align:center;-webkit-text-stroke:.1px currentColor;">2</span>
<span id="t59" class="t" style="left:0.60px;top:168.21px;font-size:7.60px;line-height:9.88px;color:#2c6a48;letter-spacing:0.000px;width:15.4px;text-align:center;-webkit-text-stroke:.1px currentColor;">3</span>
<span id="t60" class="t" style="left:0.60px;top:180.79px;font-size:7.60px;line-height:9.88px;color:#2c6a48;letter-spacing:0.000px;width:15.4px;text-align:center;-webkit-text-stroke:.1px currentColor;">4</span>
<span id="t61" class="t" style="left:0.60px;top:193.37px;font-size:7.60px;line-height:9.88px;color:#2c6a48;letter-spacing:0.000px;width:15.4px;text-align:center;-webkit-text-stroke:.1px currentColor;">5</span>
<span id="t62" class="t" style="left:0.60px;top:205.95px;font-size:7.60px;line-height:9.88px;color:#2c6a48;letter-spacing:0.000px;width:15.4px;text-align:center;-webkit-text-stroke:.1px currentColor;">6</span>
<span id="t63" class="t" style="left:0.60px;top:218.53px;font-size:7.60px;line-height:9.88px;color:#2c6a48;letter-spacing:0.000px;width:15.4px;text-align:center;-webkit-text-stroke:.1px currentColor;">7</span>
<span id="t64" class="t" style="left:0.60px;top:231.11px;font-size:7.60px;line-height:9.88px;color:#2c6a48;letter-spacing:0.000px;width:15.4px;text-align:center;-webkit-text-stroke:.1px currentColor;">8</span>
<span id="t65" class="t" style="left:0.60px;top:243.69px;font-size:7.60px;line-height:9.88px;color:#2c6a48;letter-spacing:0.000px;width:15.4px;text-align:center;-webkit-text-stroke:.1px currentColor;">9</span>
<span id="t66" class="t" style="left:0.60px;top:256.27px;font-size:7.60px;line-height:9.88px;color:#2c6a48;letter-spacing:0.000px;width:15.4px;text-align:center;-webkit-text-stroke:.1px currentColor;">10</span>
<span id="t67" class="t" style="left:0.60px;top:268.85px;font-size:7.60px;line-height:9.88px;color:#2c6a48;letter-spacing:0.000px;width:15.4px;text-align:center;-webkit-text-stroke:.1px currentColor;">11</span>
<span id="t68" class="t" style="left:0.60px;top:281.43px;font-size:7.60px;line-height:9.88px;color:#2c6a48;letter-spacing:0.000px;width:15.4px;text-align:center;-webkit-text-stroke:.1px currentColor;">12</span>
<span id="t69" class="t" style="left:0.60px;top:294.01px;font-size:7.60px;line-height:9.88px;color:#2c6a48;letter-spacing:0.000px;width:15.4px;text-align:center;-webkit-text-stroke:.1px currentColor;">13</span>
<span id="t70" class="t" style="left:0.60px;top:306.59px;font-size:7.60px;line-height:9.88px;color:#444;letter-spacing:0.000px;width:15.4px;text-align:center;-webkit-text-stroke:.1px currentColor;">14</span>
<span id="t71" class="t" style="left:0.60px;top:319.17px;font-size:7.60px;line-height:9.88px;color:#444;letter-spacing:0.000px;width:15.4px;text-align:center;-webkit-text-stroke:.1px currentColor;">15</span>
<span id="t72" class="t" style="left:0.60px;top:331.75px;font-size:7.60px;line-height:9.88px;color:#444;letter-spacing:0.000px;width:15.4px;text-align:center;-webkit-text-stroke:.1px currentColor;">16</span>
<span id="t73" class="t" style="left:0.60px;top:344.33px;font-size:7.60px;line-height:9.88px;color:#444;letter-spacing:0.000px;width:15.4px;text-align:center;-webkit-text-stroke:.1px currentColor;">17</span>
<span id="t74" class="t" style="left:0.60px;top:356.91px;font-size:7.60px;line-height:9.88px;color:#444;letter-spacing:0.000px;width:15.4px;text-align:center;-webkit-text-stroke:.1px currentColor;">18</span>
<span id="t75" class="t" style="left:0.60px;top:369.49px;font-size:7.60px;line-height:9.88px;color:#444;letter-spacing:0.000px;width:15.4px;text-align:center;-webkit-text-stroke:.1px currentColor;">19</span>
<span id="t76" class="t" style="left:0.60px;top:382.07px;font-size:7.60px;line-height:9.88px;color:#444;letter-spacing:0.000px;width:15.4px;text-align:center;-webkit-text-stroke:.1px currentColor;">20</span>
<span id="t77" class="t" style="left:0.60px;top:394.65px;font-size:7.60px;line-height:9.88px;color:#444;letter-spacing:0.000px;width:15.4px;text-align:center;-webkit-text-stroke:.1px currentColor;">21</span>
<div class="a" style="left:0;top:404.88px;width:16px;height:8.32px;overflow:hidden"><span class="t" style="left:0;top:2.4px;width:16.4px;text-align:center;font-size:7.5px;line-height:9.5px;color:#444">22</span></div>
<span id="t78" class="t" style="left:18.60px;top:142.92px;font-size:8.10px;line-height:10.53px;color:#0c1a14;letter-spacing:0.137px;-webkit-text-stroke:.12px currentColor;">Category</span>
<span id="t79" class="t" style="left:155.80px;top:142.92px;font-size:8.10px;line-height:10.53px;color:#0c1a14;letter-spacing:0.368px;-webkit-text-stroke:.12px currentColor;">Expenditures</span>
<span id="t80" class="t" style="left:18.60px;top:155.50px;font-size:8.10px;line-height:10.53px;color:#0c1a14;letter-spacing:0.307px;-webkit-text-stroke:.12px currentColor;">Hospital</span>
<span id="t81" class="t" style="left:212.00px;top:155.50px;font-size:8.10px;line-height:10.53px;color:#0c1a14;letter-spacing:-0.308px;-webkit-text-stroke:.12px currentColor;">371</span>
<span id="t82" class="t" style="left:18.60px;top:168.08px;font-size:8.10px;line-height:10.53px;color:#0c1a14;letter-spacing:0.132px;-webkit-text-stroke:.12px currentColor;">Physician</span>
<span id="t83" class="t" style="left:212.00px;top:168.08px;font-size:8.10px;line-height:10.53px;color:#0c1a14;letter-spacing:-0.308px;-webkit-text-stroke:.12px currentColor;">218</span>
<span id="t84" class="t" style="left:18.60px;top:180.66px;font-size:8.10px;line-height:10.53px;color:#0c1a14;letter-spacing:0.115px;-webkit-text-stroke:.12px currentColor;">Drugs and Supplies</span>
<span id="t85" class="t" style="left:212.00px;top:180.66px;font-size:8.10px;line-height:10.53px;color:#0c1a14;letter-spacing:-0.308px;-webkit-text-stroke:.12px currentColor;">109</span>
<span id="t86" class="t" style="left:18.60px;top:193.25px;font-size:8.10px;line-height:10.53px;color:#0c1a14;letter-spacing:0.251px;-webkit-text-stroke:.12px currentColor;">Other Personal</span>
<span id="t87" class="t" style="left:216.30px;top:193.31px;font-size:8.00px;line-height:10.39px;color:#0c1a14;letter-spacing:-0.306px;-webkit-text-stroke:.12px currentColor;">92</span>
<span id="t88" class="t" style="left:18.60px;top:205.82px;font-size:8.10px;line-height:10.53px;color:#0c1a14;letter-spacing:0.261px;-webkit-text-stroke:.12px currentColor;">Nursing Home</span>
<span id="t89" class="t" style="left:216.30px;top:205.89px;font-size:8.00px;line-height:10.39px;color:#0c1a14;letter-spacing:-0.306px;-webkit-text-stroke:.12px currentColor;">83</span>
<span id="t90" class="t" style="left:18.60px;top:218.40px;font-size:8.10px;line-height:10.53px;color:#0c1a14;letter-spacing:0.359px;-webkit-text-stroke:.12px currentColor;">Dental</span>
<span id="t91" class="t" style="left:216.30px;top:218.47px;font-size:8.00px;line-height:10.39px;color:#0c1a14;letter-spacing:-0.306px;-webkit-text-stroke:.12px currentColor;">51</span>
<span id="t92" class="t" style="left:18.60px;top:230.98px;font-size:8.10px;line-height:10.53px;color:#0c1a14;letter-spacing:0.251px;-webkit-text-stroke:.12px currentColor;">Admin &amp; Insurance</span>
<span id="t93" class="t" style="left:216.30px;top:231.05px;font-size:8.00px;line-height:10.39px;color:#0c1a14;letter-spacing:-0.306px;-webkit-text-stroke:.12px currentColor;">50</span>
<span id="t94" class="t" style="left:18.60px;top:243.56px;font-size:8.10px;line-height:10.53px;color:#0c1a14;letter-spacing:0.266px;-webkit-text-stroke:.12px currentColor;">Public Health</span>
<span id="t95" class="t" style="left:216.30px;top:243.63px;font-size:8.00px;line-height:10.39px;color:#0c1a14;letter-spacing:-0.306px;-webkit-text-stroke:.12px currentColor;">39</span>
<span id="t96" class="t" style="left:18.60px;top:256.14px;font-size:8.10px;line-height:10.53px;color:#0c1a14;letter-spacing:0.295px;-webkit-text-stroke:.12px currentColor;">Home Health</span>
<span id="t97" class="t" style="left:216.30px;top:256.21px;font-size:8.00px;line-height:10.39px;color:#0c1a14;letter-spacing:-0.306px;-webkit-text-stroke:.12px currentColor;">32</span>
<span id="t98" class="t" style="left:18.60px;top:268.72px;font-size:8.10px;line-height:10.53px;color:#0c1a14;letter-spacing:-0.006px;-webkit-text-stroke:.12px currentColor;">Research</span>
<span id="t99" class="t" style="left:216.30px;top:268.79px;font-size:8.00px;line-height:10.39px;color:#0c1a14;letter-spacing:-0.306px;-webkit-text-stroke:.12px currentColor;">18</span>
<span id="t100" class="t" style="left:18.60px;top:281.31px;font-size:8.10px;line-height:10.53px;color:#0c1a14;letter-spacing:0.333px;-webkit-text-stroke:.12px currentColor;">Construction</span>
<span id="t101" class="t" style="left:216.30px;top:281.37px;font-size:8.00px;line-height:10.39px;color:#0c1a14;letter-spacing:-0.306px;-webkit-text-stroke:.12px currentColor;">17</span>
<span id="t102" class="t" style="left:18.60px;top:293.88px;font-size:8.10px;line-height:10.53px;color:#0c1a14;letter-spacing:0.215px;-webkit-text-stroke:.12px currentColor;">Eye and Equipment</span>
<span id="t103" class="t" style="left:216.30px;top:293.95px;font-size:8.00px;line-height:10.39px;color:#0c1a14;letter-spacing:-0.306px;-webkit-text-stroke:.12px currentColor;">14</span>
<!-- scrollbars -->
<div class="a " style="left:534.00px;top:128.00px;width:14.00px;height:285.20px;background:#e6e6e6;"></div>
<div class="a " style="left:536.60px;top:138.40px;width:9.00px;height:266.20px;background:#d6d6d6;"></div>
<div class="a " style="left:536.60px;top:129.60px;width:9.00px;height:8.80px;background:#fff;border:1px solid #c2c2c2;"></div>
<svg class="a" style="left:539.00px;top:132.80px;" width="4.2" height="2.5" viewBox="0 0 4.2 2.5"><path d="M0 2.5H4.2L2.1 0Z" fill="#666"/></svg>
<div class="a " style="left:536.60px;top:138.40px;width:9.00px;height:252.60px;background:#fff;border:1px solid #c2c2c2;"></div>
<div class="a " style="left:536.60px;top:404.40px;width:9.00px;height:8.80px;background:#fff;border:1px solid #c2c2c2;"></div>
<svg class="a" style="left:539.00px;top:407.70px;" width="4.2" height="2.5" viewBox="0 0 4.2 2.5"><path d="M0 0H4.2L2.1 2.5Z" fill="#666"/></svg>
<div class="a " style="left:547.20px;top:128.00px;width:1.20px;height:302.00px;background:#efefef;"></div>
<!-- Colorizer task pane -->
<aside class="a" style="left:548px;top:128px;width:220px;height:302px;background:#e6e6e6"></aside>
<span id="t104" class="t" style="left:557.00px;top:136.32px;font-size:13.35px;line-height:17.36px;color:#2f7d55;letter-spacing:-0.299px;-webkit-text-stroke:0;">Colorizer</span>
<svg class="a" style="left:723.20px;top:141.90px;" width="5.6" height="3" viewBox="0 0 5.6 3"><path d="M0 0H5.6 L2.8 3Z" fill="#606060"/></svg>
<svg class="a" style="left:748.90px;top:140.00px;" width="6.2" height="6.2" viewBox="0 0 6.2 6.2"><path d="M.4 .4L5.8 5.8M5.8 .4L.4 5.8" stroke="#505050" stroke-width="1.3"/></svg>
<div class="a " style="left:556.60px;top:158.00px;width:202.20px;height:263.00px;background:#fff;box-shadow:0 0 0 .6px #dcdcdc;"></div>
<div class="a " style="left:748.00px;top:158.00px;width:10.80px;height:27.80px;background:#fff;border-left:1px solid #dcdcdc;border-bottom:1px solid #dcdcdc;"></div>
<svg class="a" style="left:752.20px;top:169.90px;" width="3" height="4.2" viewBox="0 0 3 4.2"><path d="M3 0V4.2L0 2.1Z" fill="#555"/></svg>
<span id="t105" class="t" style="left:568.80px;top:169.97px;font-size:8.20px;line-height:10.66px;color:#222;letter-spacing:-0.183px;-webkit-text-stroke:.26px currentColor;">Type</span>
<span id="t106" class="t" style="left:568.80px;top:230.07px;font-size:8.20px;line-height:10.66px;color:#222;letter-spacing:0.218px;-webkit-text-stroke:.26px currentColor;">Interpolation</span>
<span id="t107" class="t" style="left:568.80px;top:259.17px;font-size:8.20px;line-height:10.66px;color:#222;letter-spacing:-0.166px;-webkit-text-stroke:.26px currentColor;">Color Space</span>
<span id="t108" class="t" style="left:568.80px;top:288.07px;font-size:8.20px;line-height:10.66px;color:#222;letter-spacing:0.016px;-webkit-text-stroke:.26px currentColor;">Pattern</span>
<div class="a " style="left:659.00px;top:164.40px;width:87.60px;height:15.20px;background:#fff;border:1px solid #d2d2d2;"></div>
<span id="t109" class="t" style="left:662.60px;top:167.80px;font-size:7.70px;line-height:10.01px;color:#3a3a3a;letter-spacing:-0.074px;">Vertical</span>
<div class="a " style="left:732.40px;top:166.40px;width:11.60px;height:10.80px;background:#ececec;border:1px solid #a8a8a8;"></div>
<svg class="a" style="left:734.80px;top:169.70px;" width="7" height="4.4" viewBox="0 0 7 4.4"><path d="M.5 .5L3.5 3.6L6.5 .5" fill="none" stroke="#1a1a1a" stroke-width="1.25"/></svg>
<div class="a " style="left:659.00px;top:223.90px;width:87.60px;height:15.70px;background:#fff;border:1px solid #d2d2d2;"></div>
<span id="t110" class="t" style="left:662.60px;top:228.00px;font-size:7.70px;line-height:10.01px;color:#3a3a3a;letter-spacing:-0.255px;">Linear</span>
<div class="a " style="left:732.40px;top:225.90px;width:11.60px;height:11.30px;background:#ececec;border:1px solid #a8a8a8;"></div>
<svg class="a" style="left:734.80px;top:229.45px;" width="7" height="4.4" viewBox="0 0 7 4.4"><path d="M.5 .5L3.5 3.6L6.5 .5" fill="none" stroke="#1a1a1a" stroke-width="1.25"/></svg>
<div class="a " style="left:659.00px;top:252.40px;width:87.60px;height:16.40px;background:#fff;border:1px solid #d2d2d2;"></div>
<span id="t111" class="t" style="left:662.60px;top:257.60px;font-size:6.47px;line-height:8.41px;color:#3a3a3a;letter-spacing:-0.316px;">RGB</span>
<div class="a " style="left:732.40px;top:254.40px;width:11.60px;height:12.00px;background:#ececec;border:1px solid #a8a8a8;"></div>
<svg class="a" style="left:734.80px;top:258.30px;" width="7" height="4.4" viewBox="0 0 7 4.4"><path d="M.5 .5L3.5 3.6L6.5 .5" fill="none" stroke="#1a1a1a" stroke-width="1.25"/></svg>
<div class="a " style="left:659.00px;top:281.80px;width:87.60px;height:15.70px;background:#fff;border:1px solid #d2d2d2;"></div>
<span id="t112" class="t" style="left:662.60px;top:286.19px;font-size:7.70px;line-height:10.01px;color:#3a3a3a;letter-spacing:-0.197px;">None</span>
<div class="a " style="left:732.40px;top:283.80px;width:11.60px;height:11.30px;background:#ececec;border:1px solid #a8a8a8;"></div>
<svg class="a" style="left:734.80px;top:287.35px;" width="7" height="4.4" viewBox="0 0 7 4.4"><path d="M.5 .5L3.5 3.6L6.5 .5" fill="none" stroke="#1a1a1a" stroke-width="1.25"/></svg>
<div class="a " style="left:567.00px;top:190.00px;width:89.00px;height:12.00px;background:#00ffff;"></div>
<div class="a " style="left:567.00px;top:205.60px;width:89.00px;height:12.00px;background:#ffff66;border:1px solid #d6d696;"></div>
<div class="a " style="left:568.00px;top:307.30px;width:178.50px;height:15.20px;background:#fff;border:1px solid #c6c6c6;"></div>
<span id="t113" class="t" style="left:637.40px;top:309.93px;font-size:9.80px;line-height:12.74px;color:#222;letter-spacing:-0.228px;font-weight:bold;-webkit-text-stroke:0;">Colorize!</span>
<!-- sheet tabs -->
<div class="a " style="left:0.00px;top:413.20px;width:548.00px;height:17.00px;background:#e6e6e6;border-top:1px solid #c8c8c8;"></div>
<svg class="a" style="left:17.60px;top:419.20px;" width="2.4" height="3.8" viewBox="0 0 2.4 3.8"><path d="M2.4 0V3.8L0 1.9Z" fill="#c2c2c2"/></svg>
<svg class="a" style="left:36.00px;top:419.20px;" width="2.4" height="3.8" viewBox="0 0 2.4 3.8"><path d="M0 0V3.8L2.4 1.9Z" fill="#c2c2c2"/></svg>
<div class="a " style="left:63.50px;top:413.20px;width:40.50px;height:15.80px;background:#fff;border-bottom:2px solid #217346;border-left:1px solid #cfcfcf;border-right:1px solid #cfcfcf;"></div>
<span id="t114" class="t" style="left:71.00px;top:416.60px;font-size:8.00px;line-height:10.40px;color:#217346;letter-spacing:-0.247px;font-weight:bold;-webkit-text-stroke:0;">Sheet1</span>
<svg class="a" style="left:125.00px;top:416.20px;" width="10" height="10" viewBox="0 0 10 10"><circle cx="5" cy="5" r="4.3" fill="none" stroke="#7a7a7a" stroke-width=".8"/><path d="M2.6 5H7.4M5 2.6V7.4" stroke="#7a7a7a" stroke-width=".9"/></svg>
<div class="a " style="left:329.00px;top:418.60px;width:0.90px;height:0.90px;background:#9a9a9a;"></div>
<div class="a " style="left:329.00px;top:421.00px;width:0.90px;height:0.90px;background:#9a9a9a;"></div>
<div class="a " style="left:329.00px;top:423.40px;width:0.90px;height:0.90px;background:#9a9a9a;"></div>
<div class="a " style="left:339.50px;top:417.60px;width:185.00px;height:9.00px;background:#d6d6d6;"></div>
<div class="a " style="left:339.50px;top:417.60px;width:9.00px;height:9.00px;background:#fff;border:1px solid #c2c2c2;"></div>
<svg class="a" style="left:342.80px;top:420.30px;" width="2.2" height="3.6" viewBox="0 0 2.2 3.6"><path d="M2.2 0V3.6L0 1.8Z" fill="#555"/></svg>
<div class="a " style="left:348.50px;top:417.60px;width:156.00px;height:9.00px;background:#fff;border:1px solid #c2c2c2;"></div>
<div class="a " style="left:527.00px;top:417.60px;width:9.00px;height:9.00px;background:#fff;border:1px solid #c2c2c2;"></div>
<svg class="a" style="left:530.60px;top:420.30px;" width="2.2" height="3.6" viewBox="0 0 2.2 3.6"><path d="M0 0V3.6L2.2 1.8Z" fill="#555"/></svg>
<!-- status bar -->
<footer class="a" style="left:0;top:429.8px;width:768px;height:15.2px;background:#f3f3f3;border-top:1px solid #dcdcdc"></footer>
<span id="t115" class="t" style="left:5.50px;top:434.01px;font-size:6.90px;line-height:8.97px;color:#444;letter-spacing:-0.230px;">Ready</span>
<svg class="a" style="left:37.00px;top:433.00px;" width="8.6" height="8.2" viewBox="0 0 8.6 8.2"><rect x="0" y="0" width="2.6" height="2.6" fill="#666"/><rect x="3.6" y=".4" width="5" height="1.6" fill="#666"/><rect x=".4" y="3.6" width="7.8" height="4.2" fill="none" stroke="#777" stroke-width=".7"/><path d="M3 3.6V7.8M5.6 3.6V7.8M.4 5.7H8.2" stroke="#777" stroke-width=".6"/></svg>
<span id="t116" class="t" style="left:416.50px;top:432.91px;font-size:6.90px;line-height:8.97px;color:#444;letter-spacing:-0.058px;">Average: 91.16666667</span>
<span id="t117" class="t" style="left:496.00px;top:432.91px;font-size:6.90px;line-height:8.97px;color:#444;letter-spacing:0.114px;">Count: 26</span>
<span id="t118" class="t" style="left:537.00px;top:432.91px;font-size:6.90px;line-height:8.97px;color:#444;letter-spacing:-0.104px;">Sum: 1094</span>
<div class="a " style="left:581.50px;top:430.40px;width:22.50px;height:14.00px;background:#c9c9c9;"></div>
<svg class="a" style="left:588.50px;top:433.00px;" width="8.4" height="8.2" viewBox="0 0 8.4 8.2"><rect x=".4" y=".4" width="7.6" height="7.4" fill="none" stroke="#666" stroke-width=".8"/><path d="M.4 2.9H8M.4 5.4H8M3 .4V7.8M5.5 .4V7.8" stroke="#666" stroke-width=".7"/></svg>
<svg class="a" style="left:612.00px;top:433.00px;" width="9" height="8.2" viewBox="0 0 9 8.2"><rect x=".4" y=".4" width="8.2" height="7.4" fill="none" stroke="#777" stroke-width=".8"/><rect x="2.4" y="1.6" width="4.2" height="5" fill="none" stroke="#777" stroke-width=".7"/></svg>
<svg class="a" style="left:636.00px;top:433.00px;" width="9" height="8.2" viewBox="0 0 9 8.2"><rect x=".4" y=".4" width="8.2" height="7.4" fill="none" stroke="#777" stroke-width=".8"/><path d="M2.8 .4V4.4H8.6" fill="none" stroke="#777" stroke-width=".8"/></svg>
<div class="a " style="left:655.80px;top:436.80px;width:3.00px;height:1.00px;background:#555;"></div>
<div class="a " style="left:662.00px;top:436.90px;width:62.80px;height:0.80px;background:#a8a8a8;"></div>
<div class="a " style="left:692.40px;top:433.00px;width:3.00px;height:8.40px;background:#666;"></div>
<div class="a " style="left:727.40px;top:436.80px;width:3.60px;height:1.00px;background:#555;"></div>
<div class="a " style="left:728.70px;top:435.50px;width:1.00px;height:3.60px;background:#555;"></div>
<span id="t119" class="t" style="left:739.00px;top:432.91px;font-size:6.90px;line-height:8.97px;color:#444;letter-spacing:-0.375px;">100%</span>
<div class="a " style="left:0.00px;top:444.00px;width:768.00px;height:1.00px;background:#9a9a9a;"></div>
<div class="a " style="left:0.00px;top:1.00px;width:1.00px;height:444.00px;background:#8d9a92;"></div>
<div class="a " style="left:767.00px;top:1.00px;width:1.00px;height:444.00px;background:#b9b9b9;"></div>
</body>
</html>
